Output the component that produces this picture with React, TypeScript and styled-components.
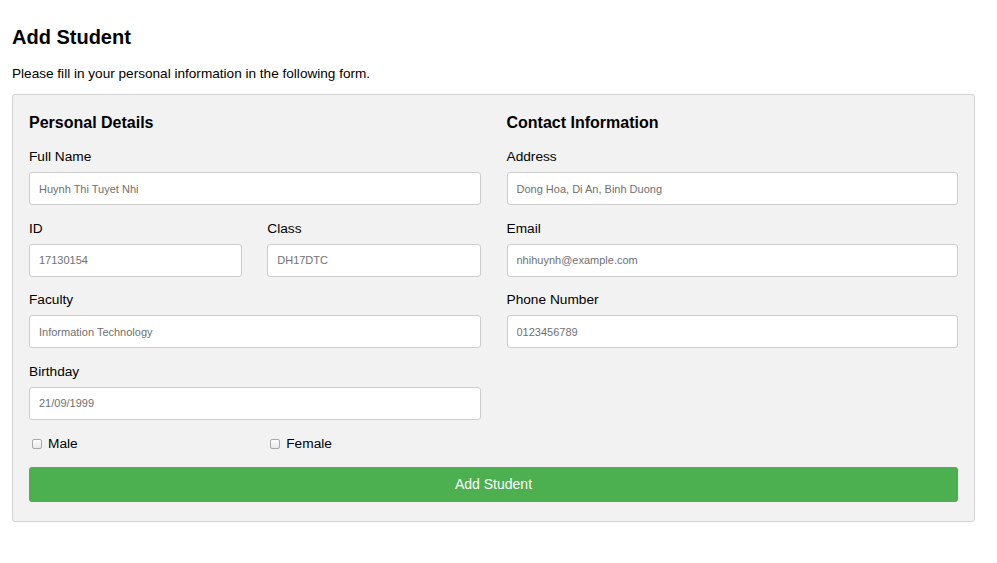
import React from "react";
import styled, { createGlobalStyle } from "styled-components";

const Global = createGlobalStyle`
  html, body { margin: 0; padding: 0; background: #fff; }
  body { font-family: "Liberation Sans", Arial, sans-serif; color: #000; }
  * { box-sizing: border-box; }
`;

const Page = styled.div`
  padding: 26px 22px 40px 12px;
`;

const Title = styled.h2`
  margin: 0;
  font-size: 20px;
  line-height: 23px;
  font-weight: bold;
`;

const Intro = styled.p`
  margin: 17px 0 12px;
  font-size: 13.6px;
  line-height: 16px;
`;

const Card = styled.form`
  background: #f2f2f2;
  border: 1px solid #d3d3d3;
  border-radius: 3px;
  padding: 19px 16px 19px;
`;

const Columns = styled.div`
  display: grid;
  grid-template-columns: 1fr 1fr;
  column-gap: 26px;
  align-items: start;
`;

const Column = styled.div`
  display: flex;
  flex-direction: column;
`;

const SectionTitle = styled.h3`
  margin: 0 0 16px;
  font-size: 16px;
  line-height: 18px;
  font-weight: bold;
`;

const Field = styled.div`
  display: flex;
  flex-direction: column;
  margin-bottom: 14.66px;
`;

const Label = styled.label`
  font-size: 13.7px;
  line-height: 16px;
  padding-top: 1px;
  margin-bottom: 7px;
`;

const Input = styled.input`
  height: 33px;
  width: 100%;
  border: 1px solid #ccc;
  border-radius: 3px;
  background: #fff;
  padding: 0 9px;
  font-family: "Liberation Sans", Arial, sans-serif;
  font-size: 11px;
  outline: none;
  &::placeholder { color: #707070; }
`;

const Pair = styled.div`
  display: grid;
  grid-template-columns: 1fr 1fr;
  column-gap: 25px;
`;

const CheckRow = styled.div`
  display: grid;
  grid-template-columns: 1fr 1fr;
  column-gap: 25px;
  height: 16px;
  margin-top: 1px;
`;

const CheckLabel = styled.label`
  display: flex;
  align-items: center;
  gap: 6px;
  font-size: 13.7px;
  line-height: 16px;
  padding-left: 3px;
`;

const Box = styled.input`
  appearance: none;
  -webkit-appearance: none;
  margin: 0;
  width: 10px;
  height: 10px;
  border: 1px solid #a9a9a9;
  border-radius: 2px;
  background: linear-gradient(#fdfdfd, #e9e9e9);
`;

const Submit = styled.button`
  display: block;
  width: 100%;
  height: 35px;
  margin-top: 15px;
  border: none;
  border-radius: 3px;
  background: #4caf50;
  color: #fff;
  font-family: "Liberation Sans", Arial, sans-serif;
  font-size: 14px;
  cursor: pointer;
`;

const F = ({ label, ph }: { label: string; ph: string }) => (
  <Field>
    <Label>{label}</Label>
    <Input placeholder={ph} />
  </Field>
);

export default function App() {
  return (
    <>
      <Global />
      <Page>
        <Title>Add Student</Title>
        <Intro>Please fill in your personal information in the following form.</Intro>
        <Card onSubmit={(e) => e.preventDefault()}>
          <Columns>
            <Column>
              <SectionTitle>Personal Details</SectionTitle>
              <F label="Full Name" ph="Huynh Thi Tuyet Nhi" />
              <Pair>
                <F label="ID" ph="17130154" />
                <F label="Class" ph="DH17DTC" />
              </Pair>
              <F label="Faculty" ph="Information Technology" />
              <F label="Birthday" ph="21/09/1999" />
              <CheckRow>
                <CheckLabel>
                  <Box type="checkbox" />
                  Male
                </CheckLabel>
                <CheckLabel>
                  <Box type="checkbox" />
                  Female
                </CheckLabel>
              </CheckRow>
            </Column>
            <Column>
              <SectionTitle>Contact Information</SectionTitle>
              <F label="Address" ph="Dong Hoa, Di An, Binh Duong" />
              <F label="Email" ph="nhihuynh@example.com" />
              <F label="Phone Number" ph="0123456789" />
            </Column>
          </Columns>
          <Submit type="submit">Add Student</Submit>
        </Card>
      </Page>
    </>
  );
}
